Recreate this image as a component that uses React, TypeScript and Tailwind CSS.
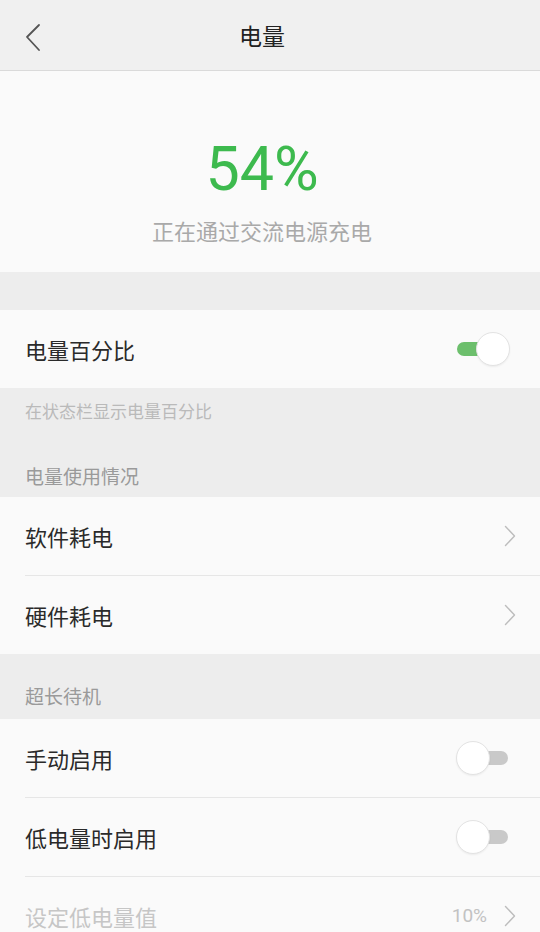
import type { ReactNode } from 'react'

const font = { fontFamily: '"Noto Sans CJK SC", "Noto Sans", sans-serif' }

function Chevron({ className = '' }: { className?: string }) {
  return (
    <svg width="12" height="22" viewBox="0 0 12 22" fill="none" className={className}>
      <path d="M1.5 1.5 L10.5 11 L1.5 20.5" stroke="currentColor" strokeWidth="1.4" strokeLinecap="round" strokeLinejoin="round" />
    </svg>
  )
}

function Toggle({ on }: { on: boolean }) {
  return (
    <div className="relative mr-[6px] h-[36px] w-[56px]">
      <div
        className={`absolute top-[11px] h-[14px] rounded-full ${
          on ? 'left-[3px] w-[36px] bg-[#6cbf6c]' : 'left-[28px] w-[26px] bg-[#c9c9c9]'
        }`}
      />
      <div
        className={`absolute top-[1px] size-[34px] rounded-full border border-[#e3e3e3] bg-white shadow-[0_1px_2px_rgba(0,0,0,0.06)] ${
          on ? 'left-[22px]' : 'left-[2px]'
        }`}
      />
    </div>
  )
}

function Row({ label, right, divider = false, dim = false }: { label: string; right?: ReactNode; divider?: boolean; dim?: boolean }) {
  return (
    <div className="bg-[#fafafa]">
      <div className="flex h-[78px] items-center justify-between pl-[25px] pr-[24px]">
        <span className={`text-[22px] ${dim ? 'text-[#c6c6c6]' : 'text-[#2a2a2a]'}`}>{label}</span>
        {right}
      </div>
      {divider && <div className="ml-[25px] h-px bg-[#e6e6e6]" />}
    </div>
  )
}

export default function App() {
  return (
    <div className="min-h-[932px] w-[540px] overflow-hidden bg-[#fafafa]" style={font}>
      <div className="relative flex h-[71px] items-center justify-center border-b border-[#dadada] bg-[#f0f0f0] pr-[16px]">
        <svg width="18" height="30" viewBox="0 0 18 30" fill="none" className="absolute left-[24px] top-[23px] text-[#555]">
          <path d="M15 2 L3 14 L15 27" stroke="currentColor" strokeWidth="1.8" strokeLinecap="round" strokeLinejoin="round" />
        </svg>
        <span className="text-[23px] text-[#222]">电量</span>
      </div>

      <div className="flex h-[201px] flex-col items-center bg-[#fafafa] pr-[16px]">
        <div className="mt-[62px] text-[61px] leading-[72px] text-[#3dba4e]" style={{ fontFamily: 'Roboto, "Noto Sans", sans-serif' }}>
          54%
        </div>
        <div className="mt-[10px] text-[22px] leading-[30px] text-[#a9a9a9]">正在通过交流电源充电</div>
      </div>

      <div className="h-[38px] bg-[#ededed]" />

      <Row label="电量百分比" right={<Toggle on />} />

      <div className="bg-[#ededed]">
        <div className="flex h-[46px] items-center pl-[25px] text-[17px] text-[#bababa]">在状态栏显示电量百分比</div>
        <div className="flex h-[63px] items-end pb-[7px] pl-[25px] text-[19px] leading-[28px] text-[#9a9a9a]">电量使用情况</div>
      </div>

      <Row label="软件耗电" right={<Chevron className="text-[#bdbdbd]" />} divider />
      <Row label="硬件耗电" right={<Chevron className="text-[#bdbdbd]" />} />

      <div className="flex h-[65px] items-end bg-[#ededed] pb-[9px] pl-[25px] text-[19px] leading-[28px] text-[#9a9a9a]">超长待机</div>

      <Row label="手动启用" right={<Toggle on={false} />} divider />
      <Row label="低电量时启用" right={<Toggle on={false} />} divider />
      <Row
        label="设定低电量值"
        dim
        right={
          <div className="flex items-center gap-[17px]">
            <span className="text-[19px] text-[#c2c2c2]" style={{ fontFamily: 'Roboto, sans-serif' }}>10%</span>
            <Chevron className="text-[#bdbdbd]" />
          </div>
        }
      />
    </div>
  )
}
